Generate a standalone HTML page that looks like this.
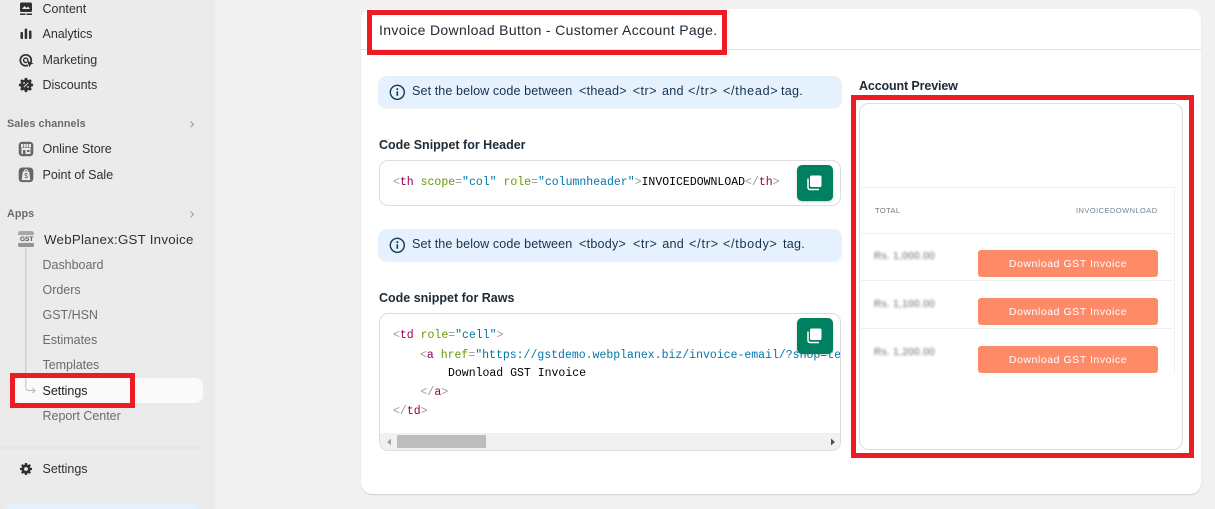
<!DOCTYPE html>
<html><head><meta charset="utf-8">
<style>
html,body{margin:0;padding:0;width:1215px;height:509px;overflow:hidden;background:#f1f1f1;font-family:"Liberation Sans",sans-serif}
#root{position:relative;width:1215px;height:509px;overflow:hidden;background:#f1f1f1}
.a{position:absolute}
.t{position:absolute;white-space:pre;line-height:16px;height:16px}
#side{left:0;top:0;width:215px;height:509px;background:#ebebeb}
.n{left:42.5px;font-size:12.5px;color:#303030;letter-spacing:-.02px}
.s{left:42.5px;font-size:12.5px;color:#6b6b6b;letter-spacing:-.02px}
.h{left:7px;font-size:10.8px;color:#6a6a6a;font-weight:700;letter-spacing:.05px}
.code{font-family:"Liberation Mono",monospace;font-size:11.5px;color:#000;left:393px}
.p{color:#666}.g{color:#999}.m{color:#905}.v{color:#690}.b{color:#07a}
.info{left:378px;width:464px;height:32px;background:#e5f2fd;border-radius:9px;box-shadow:0 1px 1px rgba(0,0,0,.06)}
.it{font-size:12.6px;color:#17324d;letter-spacing:.23px}
.tg{letter-spacing:.5px}
.bh{left:379px;font-size:12.5px;font-weight:700;color:#202b36}
.cb{background:#fff;border:1px solid #ddd;border-radius:9px;box-sizing:border-box}
.cp{left:797px;width:36px;height:36px;background:#008060;border-radius:5px;box-shadow:0 1px 2px rgba(0,0,0,.2)}
.btn{left:978px;width:180px;height:27px;background:#ff8a68;border-radius:3px;color:#fff;font-size:10.5px;letter-spacing:.55px;text-align:center;line-height:29px}
.l{left:859px;width:315px;height:1px;background:#f0f0f2}
.blur{left:874px;font-size:10px;color:#666;filter:blur(1.2px);letter-spacing:.35px}
.red{border:5px solid #ed1c24;box-sizing:border-box}
</style></head><body><div id="root">
<div id="side" class="a"></div>

<svg class="a" style="left:0;top:0" width="215" height="509" viewBox="0 0 215 509">
<rect x="20" y="2.500" width="12" height="9.500" rx="1.500" fill="#303030"/>
<path d="M22 9l2.500-3 2 2 1.500-1.500L30 9z" fill="#ebebeb"/>
<rect x="20" y="13.500" width="5.500" height="1.500" fill="#303030"/><rect x="26.500" y="13.500" width="5.500" height="1.500" fill="#303030"/>
<rect x="20.500" y="32" width="2.500" height="7" rx="1" fill="#303030"/><rect x="24.700" y="28.500" width="2.500" height="10.500" rx="1" fill="#303030"/><rect x="29" y="30.500" width="2.500" height="8.500" rx="1" fill="#303030"/>
<circle cx="25.800" cy="60.300" r="5.500" fill="none" stroke="#303030" stroke-width="1.700"/>
<circle cx="25.800" cy="60.300" r="2.200" fill="none" stroke="#303030" stroke-width="1.400"/>
<path d="M26.500 61l7.500 2.600-1 3.800-4 .6z" fill="#ebebeb"/>
<path d="M26.800 60.800l6.800 2.600-2.800 1.100-1.200 2.800z" fill="#303030"/>
<circle cx="26" cy="85" r="5.500" fill="#303030"/>
<g fill="#303030"><circle cx="26" cy="79.300" r="1.500"/><circle cx="26" cy="90.700" r="1.500"/><circle cx="20.300" cy="85" r="1.500"/><circle cx="31.700" cy="85" r="1.500"/><circle cx="22" cy="81" r="1.500"/><circle cx="30" cy="81" r="1.500"/><circle cx="22" cy="89" r="1.500"/><circle cx="30" cy="89" r="1.500"/></g>
<path d="M23.800 87.200l4.400-4.400" stroke="#ebebeb" stroke-width="1"/><circle cx="24" cy="83" r=".9" fill="#ebebeb"/><circle cx="28" cy="87" r=".9" fill="#ebebeb"/>
<path d="M190.500 121.500l3 2.900-3 2.900M190.500 211.500l3 2.900-3 2.900" fill="none" stroke="#9a9a9a" stroke-width="1"/>
<rect x="18.700" y="141.700" width="14.600" height="14.600" rx="3.500" fill="#666"/>
<rect x="21" y="144" width="10" height="3.500" fill="#ebebeb"/><rect x="21.500" y="148" width="9" height="6" fill="#ebebeb"/><rect x="23" y="150" width="2.500" height="4" fill="#666"/><rect x="27" y="150" width="2.500" height="2" fill="#666"/>
<path d="M23.500 144v3.500M26 144v3.500M28.500 144v3.500" stroke="#666" stroke-width=".7"/>
<rect x="18.700" y="167.500" width="14.600" height="14.600" rx="3.500" fill="#666"/>
<path d="M22.800 171.500h6.400l1.100 8.600h-8.600z" fill="#ebebeb"/><path d="M24.500 171.500c0-2.500 3-2.500 3 0" fill="none" stroke="#ebebeb" stroke-width="1"/>
<path d="M27.400 173.800c-1-.6-2.400-.3-2.400.7 0 1.200 2.300.9 2.300 2.200 0 1.100-1.500 1.300-2.600.7" fill="none" stroke="#666" stroke-width="1"/>
<rect x="18" y="231" width="16" height="16" rx="2.500" fill="#a8a8a8"/>
<rect x="18" y="235" width="16" height="8.500" fill="#e6e6e6"/>
<rect x="18" y="243" width="16" height="4" rx="1.500" fill="#949494"/>
<path d="M25.800 248V378" fill="none" stroke="#c2c2c2" stroke-width="1"/>
</svg>
<div class="a" style="left:0;top:446px;width:200px;height:3px;background:#e6e6e6"></div>
<div class="a" style="left:6px;top:503px;width:191px;height:12px;background:#e4f0fb;border-radius:8px"></div>
<div class="a" style="left:14px;top:378px;width:189px;height:25px;background:#fafafa;border-radius:8px"></div>
<svg class="a" style="left:0;top:0" width="215" height="509">
<path d="M27.500 390.500h7.500M32.500 388l2.500 2.500-2.500 2.500" fill="none" stroke="#b5b5b5" stroke-width="1"/><path d="M25.800 378v9a3.500 3.500 0 0 0 2 3.500" fill="none" stroke="#c2c2c2" stroke-width="1"/>
<circle cx="26" cy="469" r="4.600" fill="#303030"/>
<g stroke="#303030" stroke-width="2.300"><path d="M26 463v2.500M26 472.500v2.500M20 469h2.500M29.500 469h2.500M21.800 464.800l1.800 1.800M28.400 471.400l1.800 1.800M21.800 473.200l1.800-1.800M28.400 466.600l1.800-1.800"/></g>
<circle cx="26" cy="469" r="1.900" fill="#ebebeb"/>
</svg>

<div class="t n" style="top:1px">Content</div>
<div class="t n" style="top:26px">Analytics</div>
<div class="t n" style="top:52px">Marketing</div>
<div class="t n" style="top:77px">Discounts</div>
<div class="t h" style="top:115.500px">Sales channels</div>
<div class="t n" style="top:141px">Online Store</div>
<div class="t n" style="top:167px">Point of Sale</div>
<div class="t h" style="top:205.500px">Apps</div>
<div class="t" style="left:20px;top:231.500px;font-size:6.500px;font-weight:700;color:#555">GST</div>
<div class="t" style="left:44px;top:232px;font-size:13.300px;color:#303030;letter-spacing:.25px">WebPlanex:GST Invoice</div>
<div class="t s" style="top:257px">Dashboard</div>
<div class="t s" style="top:282px">Orders</div>
<div class="t s" style="top:307px">GST/HSN</div>
<div class="t s" style="top:332px">Estimates</div>
<div class="t s" style="top:357px">Templates</div>
<div class="t n" style="top:383px;color:#202020">Settings</div>
<div class="t s" style="top:408px">Report Center</div>
<div class="t n" style="top:461px">Settings</div>

<div class="a" style="left:361px;top:9px;width:840px;height:485px;background:#fff;border-radius:11px;box-shadow:0 1px 1px rgba(0,0,0,.14)"></div>
<div class="a" style="left:361px;top:49px;width:840px;height:1px;background:#e3e3e3"></div>
<div class="t" style="left:379px;top:22px;font-size:14px;color:#202b36;letter-spacing:.34px">Invoice Download Button - Customer Account Page.</div>

<div class="a info" style="top:76px"></div>
<div class="a info" style="top:229px"></div>
<svg class="a" style="left:388px;top:81.500px" width="20" height="20" viewBox="0 0 20 20"><circle cx="9.300" cy="10.300" r="7" fill="none" stroke="#123a55" stroke-width="1.400"/><rect x="8.500" y="9.300" width="1.600" height="4.500" fill="#123a55"/><circle cx="9.300" cy="7.100" r="1" fill="#123a55"/></svg>
<svg class="a" style="left:388px;top:234.500px" width="20" height="20" viewBox="0 0 20 20"><circle cx="9.300" cy="10.300" r="7" fill="none" stroke="#123a55" stroke-width="1.400"/><rect x="8.500" y="9.300" width="1.600" height="4.500" fill="#123a55"/><circle cx="9.300" cy="7.100" r="1" fill="#123a55"/></svg>

<div class="t it" style="left:412px;top:83px;letter-spacing:.08px">Set the below code between</div>
<div class="t it" style="left:579px;top:83px">&lt;thead&gt;</div>
<div class="t it tg" style="left:632.700px;top:83px">&lt;tr&gt;</div>
<div class="t it" style="left:662px;top:83px">and</div>
<div class="t it tg" style="left:688px;top:83px;letter-spacing:.8px">&lt;/tr&gt;</div>
<div class="t it tg" style="left:723px;top:83px;letter-spacing:.7px">&lt;/thead&gt;</div>
<div class="t it" style="left:781px;top:83px">tag.</div>

<div class="t it" style="left:412px;top:236px;letter-spacing:.08px">Set the below code between</div>
<div class="t it" style="left:579px;top:236px">&lt;tbody&gt;</div>
<div class="t it tg" style="left:633px;top:236px">&lt;tr&gt;</div>
<div class="t it" style="left:662.300px;top:236px">and</div>
<div class="t it tg" style="left:689px;top:236px;letter-spacing:.8px">&lt;/tr&gt;</div>
<div class="t it tg" style="left:723px;top:236px;letter-spacing:.7px">&lt;/tbody&gt;</div>
<div class="t it" style="left:783px;top:236px">tag.</div>

<div class="t bh" style="top:136.500px">Code Snippet for Header</div>
<div class="t bh" style="top:289.500px">Code snippet for Raws</div>

<div class="a cb" style="left:379px;top:160px;width:462px;height:46px"></div>
<div class="t code" style="top:175px"><span class="g">&lt;</span><span class="m">th</span> <span class="v">scope</span><span class="g">=</span><span class="b">"col"</span> <span class="v">role</span><span class="g">=</span><span class="b">"columnheader"</span><span class="g">&gt;</span>INVOICEDOWNLOAD<span class="g">&lt;/</span><span class="m">th</span><span class="g">&gt;</span></div>

<div class="a cb" style="left:379px;top:313px;width:462px;height:138px;overflow:hidden">
  <div class="a" style="left:0;bottom:0;width:462px;height:17px;background:#f1f1f1"></div>
  <div class="a" style="left:17px;bottom:2px;width:89px;height:13px;background:#bdbdbd"></div>
  <svg class="a" style="left:0;bottom:0" width="462" height="17"><path d="M11 5.500l-4 3.500 4 3.500z" fill="#a3a3a3"/><path d="M451 5.500l4 3.500-4 3.500z" fill="#505050"/></svg>
  <div class="t code" style="left:40px;top:34px"><span class="g">&lt;</span><span class="m">a</span> <span class="v">href</span><span class="g">=</span><span class="b">"https://gstdemo.webplanex.biz/invoice-email/?shop=test</span></div>
</div>
<div class="t code" style="top:328px"><span class="g">&lt;</span><span class="m">td</span> <span class="v">role</span><span class="g">=</span><span class="b">"cell"</span><span class="g">&gt;</span></div>
<div class="t code" style="left:448px;top:366px">Download GST Invoice</div>
<div class="t code" style="left:420.500px;top:385px"><span class="g">&lt;/</span><span class="m">a</span><span class="g">&gt;</span></div>
<div class="t code" style="top:404px"><span class="g">&lt;/</span><span class="m">td</span><span class="g">&gt;</span></div>

<div class="a cp" style="top:165px"></div>
<div class="a cp" style="top:318px"></div>
<svg class="a" style="left:797px;top:165px" width="36" height="36"><rect x="13" y="10.500" width="11.500" height="11.500" rx="1.500" fill="#fff"/><path d="M11 13.500v9a2 2 0 0 0 2 2h9" fill="none" stroke="#fff" stroke-width="1.500"/></svg>
<svg class="a" style="left:797px;top:318px" width="36" height="36"><rect x="13" y="10.500" width="11.500" height="11.500" rx="1.500" fill="#fff"/><path d="M11 13.500v9a2 2 0 0 0 2 2h9" fill="none" stroke="#fff" stroke-width="1.500"/></svg>

<div class="t bh" style="left:859px;top:78px;letter-spacing:-.13px">Account Preview</div>
<div class="a" style="left:859px;top:103px;width:324px;height:347px;border:1px solid #ddd;border-radius:10px;box-sizing:border-box"></div>
<div class="a l" style="top:187px"></div>
<div class="a l" style="top:233px"></div>
<div class="a l" style="top:280px"></div>
<div class="a l" style="top:328px"></div>
<div class="a" style="left:1174px;top:187px;width:1px;height:187px;background:#f0f0f2"></div>
<div class="t" style="left:875px;top:202.500px;font-size:7.500px;color:#777;letter-spacing:.4px">TOTAL</div>
<div class="t" style="left:1076px;top:202.500px;font-size:7.500px;color:#6f8793;letter-spacing:.44px">INVOICEDOWNLOAD</div>
<div class="t blur" style="top:249px">Rs. 1,000.00</div>
<div class="t blur" style="top:297px">Rs. 1,100.00</div>
<div class="t blur" style="top:345px">Rs. 1,200.00</div>
<div class="a btn" style="top:250px">Download GST Invoice</div>
<div class="a btn" style="top:298px">Download GST Invoice</div>
<div class="a btn" style="top:346px">Download GST Invoice</div>

<div class="a red" style="left:367px;top:10px;width:360px;height:45px"></div>
<div class="a red" style="left:10px;top:373px;width:125px;height:35px"></div>
<div class="a red" style="left:851px;top:95px;width:343px;height:363px"></div>
</div></body></html>
